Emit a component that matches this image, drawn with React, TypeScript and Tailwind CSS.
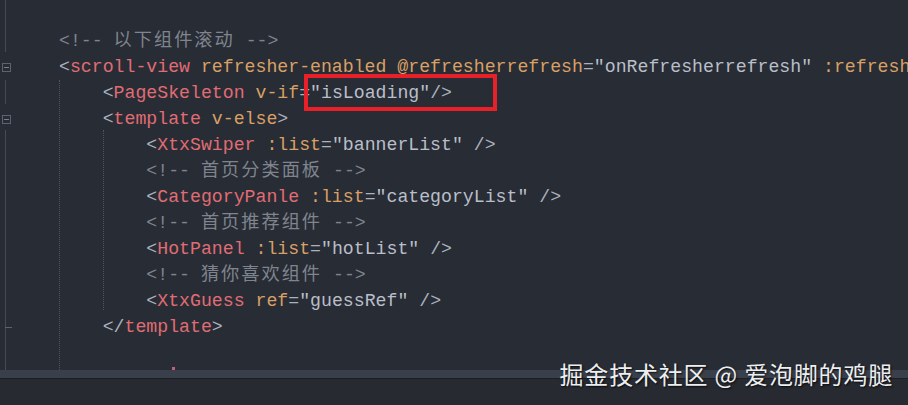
import React from "react";

const P = "text-[#abb2bf]"; // punctuation
const T = "text-[#e06c75]"; // tag
const A = "text-[#d9a066]"; // attr
const S = "text-[#b9bfca]"; // string
const C = "text-[#7f848e]"; // comment

function Cjk({ children }: { children: React.ReactNode }) {
  return (
    <span className="tracking-[2px] leading-none" style={{ fontFamily: "'Noto Sans CJK SC', sans-serif" }}>
      {children}
    </span>
  );
}

function Comment({ indent, text }: { indent: string; text: string }) {
  return (
    <span className={C}>
      {indent}
      {"<!-- "}
      <Cjk>{text}</Cjk>
      {" -->"}
    </span>
  );
}

const lines: React.ReactNode[] = [
  <Comment indent="" text="以下组件滚动" />,
  <>
    <span className={P}>{"<"}</span>
    <span className={T}>scroll-view</span>
    <span className={A}> refresher-enabled @refresherrefresh</span>
    <span className={P}>=</span>
    <span className={S}>"onRefresherrefresh"</span>
    <span className={A}> :refresh</span>
  </>,
  <>
    <span className={P}>{"    <"}</span>
    <span className={T}>PageSkeleton</span>
    <span className={A}> v-if</span>
    <span className={P}>=</span>
    <span className={S}>"isLoading"</span>
    <span className={P}>{"/>"}</span>
  </>,
  <>
    <span className={P}>{"    <"}</span>
    <span className={T}>template</span>
    <span className={A}> v-else</span>
    <span className={P}>{">"}</span>
  </>,
  <>
    <span className={P}>{"        <"}</span>
    <span className={T}>XtxSwiper</span>
    <span className={A}> :list</span>
    <span className={P}>=</span>
    <span className={S}>"bannerList"</span>
    <span className={P}>{" />"}</span>
  </>,
  <Comment indent="        " text="首页分类面板" />,
  <>
    <span className={P}>{"        <"}</span>
    <span className={T}>CategoryPanle</span>
    <span className={A}> :list</span>
    <span className={P}>=</span>
    <span className={S}>"categoryList"</span>
    <span className={P}>{" />"}</span>
  </>,
  <Comment indent="        " text="首页推荐组件" />,
  <>
    <span className={P}>{"        <"}</span>
    <span className={T}>HotPanel</span>
    <span className={A}> :list</span>
    <span className={P}>=</span>
    <span className={S}>"hotList"</span>
    <span className={P}>{" />"}</span>
  </>,
  <Comment indent="        " text="猜你喜欢组件" />,
  <>
    <span className={P}>{"        <"}</span>
    <span className={T}>XtxGuess</span>
    <span className={A}> ref</span>
    <span className={P}>=</span>
    <span className={S}>"guessRef"</span>
    <span className={P}>{" />"}</span>
  </>,
  <>
    <span className={P}>{"    </"}</span>
    <span className={T}>template</span>
    <span className={P}>{">"}</span>
  </>,
  <>{" "}</>,
];

function FoldBox() {
  return (
    <div className="w-[9px] h-[9px] border border-[#5d636e] flex items-center justify-center bg-[#282c34]">
      <div className="w-[5px] h-px bg-[#7a808b]" />
    </div>
  );
}

export default function App() {
  return (
    <div className="relative w-[908px] h-[405px] overflow-hidden bg-[#282c34] flex flex-col">
      <div className="relative flex h-[370px] overflow-hidden">
        {/* gutter */}
        <div className="relative w-[59px] shrink-0 pt-[28px]">
          <div className="absolute left-[5px] top-0 h-[52px] w-px bg-[#454b56]" />
          <div className="absolute left-[5px] top-[80px] h-[24px] w-px bg-[#454b56]" />
          <div className="absolute left-[5px] top-[130px] h-[240px] w-px bg-[#454b56]" />
          {lines.map((_, i) => (
            <div key={i} className="relative h-[26px] flex items-center pl-[2px]">
              {(i === 1 || i === 3) && <FoldBox />}
              {i === 11 && <div className="ml-[3px] w-[7px] h-px bg-[#5d636e]" />}
            </div>
          ))}
        </div>
        {/* code */}
        <div
          className="relative flex-1 min-w-0 pt-[28px] text-[18.2px] whitespace-pre"
          style={{ fontFamily: "'Liberation Mono', 'Noto Sans CJK SC', monospace" }}
        >
          <div className="absolute left-0 top-[80px] h-[290px] border-l border-dotted border-[#4f5563]" />
          <div className="absolute left-[44px] top-[130px] h-[180px] border-l border-dotted border-[#4f5563]" />
          {lines.map((l, i) => (
            <div key={i} className="h-[26px] leading-[26px]">
              {l}
            </div>
          ))}
          <div className="absolute left-[113px] top-[367px] w-[3px] h-[3px] bg-[#c0607a]" />
          {/* highlight box */}
          <div className="absolute left-[245px] top-[74px] w-[193px] h-[37px] border-[4px] border-[#e8202a]" />
        </div>
      </div>
      <div className="h-[8px] bg-[#3a404b]" />
      <div className="h-px bg-[#1b1e23]" />
      <div className="flex-1 bg-[#272a31]" />
      <div
        className="absolute right-[15px] top-[358px] text-[24px] leading-[32px] text-[#eceef0] tracking-[0.8px]"
        style={{ fontFamily: "'Noto Sans CJK SC', sans-serif", textShadow: "1px 1px 2px rgba(0,0,0,0.8)" }}
      >
        掘金技术社区 @ 爱泡脚的鸡腿
      </div>
    </div>
  );
}
